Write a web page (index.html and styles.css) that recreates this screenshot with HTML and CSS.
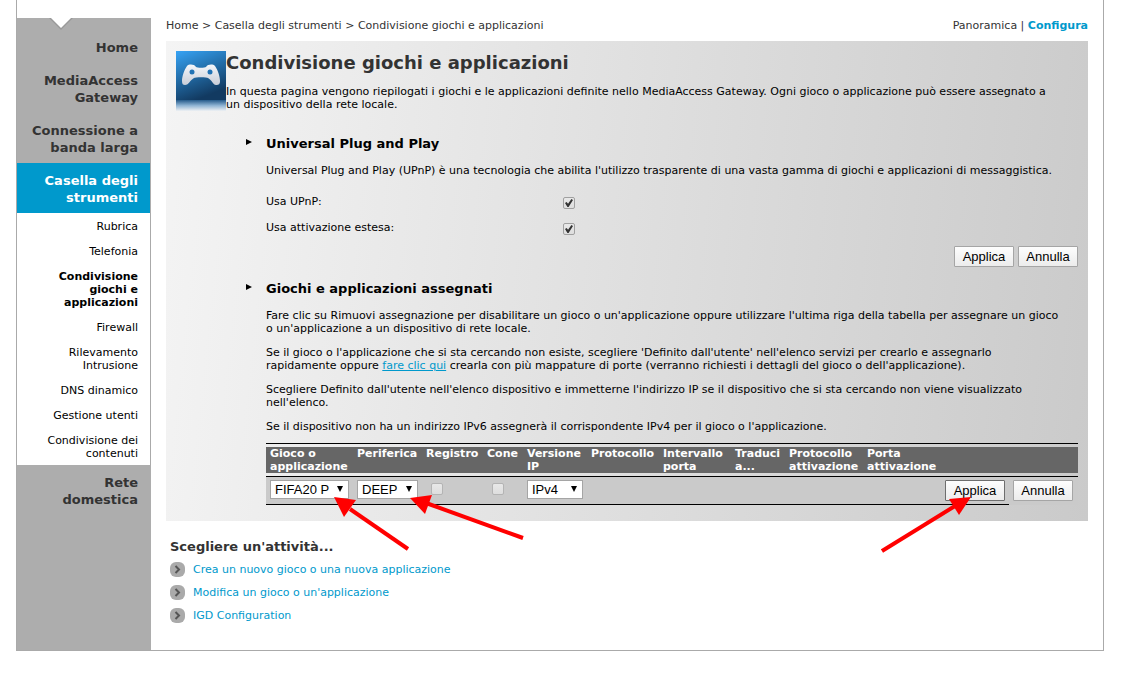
FILE: index.html
```
<!DOCTYPE html>
<html lang="it">
<head>
    <meta charset="UTF-8">
    <meta name="viewport" content="width=device-width, initial-scale=1.0">
    <title>MediaAccess Gateway - Condivisione giochi e applicazioni</title>
    <link rel="stylesheet" href="styles.css">
</head>
<body>

<div class="page">

    <!-- Left menu -->
    <nav class="sidebar">
        <svg class="notch" width="24" height="13" viewBox="0 0 24 13">
            <path d="M0 0 L12 12 L24 0 Z" fill="#999"/>
            <path d="M2 0 L12 10 L22 0 Z" fill="#fff"/>
        </svg>
        <a href="#" class="menu">Home</a>
        <a href="#" class="menu">MediaAccess Gateway</a>
        <a href="#" class="menu">Connessione a banda larga</a>
        <a href="#" class="menu active">Casella degli strumenti</a>
        <div class="submenu">
            <a href="#">Rubrica</a>
            <a href="#">Telefonia</a>
            <a href="#" class="current">Condivisione giochi e applicazioni</a>
            <a href="#">Firewall</a>
            <a href="#">Rilevamento Intrusione</a>
            <a href="#">DNS dinamico</a>
            <a href="#">Gestione utenti</a>
            <a href="#">Condivisione dei contenuti</a>
        </div>
        <a href="#" class="menu">Rete domestica</a>
    </nav>

    <main class="content">
        <div class="topbar">
            <div><a href="#">Home</a> &gt; <a href="#">Casella degli strumenti</a> &gt; <a href="#">Condivisione giochi e applicazioni</a></div>
            <div><a href="#">Panoramica</a> | <a href="#" class="configure">Configura</a></div>
        </div>

        <div class="panel">
            <div class="intro">
                <svg class="logo" width="50" height="60" viewBox="0 0 50 60">
                    <defs>
                        <linearGradient id="sky" x1="0" y1="0" x2="0.4" y2="1">
                            <stop offset="0" stop-color="#36a3f5"/>
                            <stop offset="0.5" stop-color="#236fab"/>
                            <stop offset="1" stop-color="#123a61"/>
                        </linearGradient>
                        <linearGradient id="fade" x1="0" y1="0" x2="0" y2="1">
                            <stop offset="0" stop-color="#245a8a"/>
                            <stop offset="0.5" stop-color="#8eb3d3"/>
                            <stop offset="1" stop-color="#eef1f4"/>
                        </linearGradient>
                        <linearGradient id="pad" x1="0" y1="0" x2="0" y2="1">
                            <stop offset="0" stop-color="#f4f6fa"/>
                            <stop offset="1" stop-color="#c9ced8"/>
                        </linearGradient>
                    </defs>
                    <rect width="50" height="49" fill="url(#sky)"/>
                    <rect y="49" width="50" height="11" fill="url(#fade)"/>
                    <path fill="url(#pad)" d="M11 15 C13 13 18 13 20 16 C21 17 29 17 30 16 C32 13 37 13 39 15 C42 19 44 26 44 30 C44 33 43 34 40 34 C37 34 36 29 32 27 C31 26 19 26 18 27 C14 29 13 34 9 34 C7 34 6 33 6 30 C6 26 8 19 11 15 Z"/>
                    <circle cx="16" cy="21" r="2.5" fill="#2273b5"/>
                    <circle cx="34" cy="21" r="2.5" fill="#2273b5"/>
                </svg>
                <div>
                    <h1>Condivisione giochi e applicazioni</h1>
                    <p>In questa pagina vengono riepilogati i giochi e le applicazioni definite nello MediaAccess Gateway. Ogni gioco o applicazione può essere assegnato a un dispositivo della rete locale.</p>
                </div>
            </div>

            <!-- UPnP -->
            <section>
                <h2>Universal Plug and Play</h2>
                <p>Universal Plug and Play (UPnP) è una tecnologia che abilita l'utilizzo trasparente di una vasta gamma di giochi e applicazioni di messaggistica.</p>
                <div class="option">
                    <label for="upnp">Usa UPnP:</label>
                    <input type="checkbox" id="upnp" checked>
                </div>
                <div class="option">
                    <label for="extended">Usa attivazione estesa:</label>
                    <input type="checkbox" id="extended" checked>
                </div>
                <div class="buttons">
                    <button>Applica</button>
                    <button>Annulla</button>
                </div>
            </section>

            <!-- Assigned games -->
            <section>
                <h2>Giochi e applicazioni assegnati</h2>
                <p>Fare clic su Rimuovi assegnazione per disabilitare un gioco o un'applicazione oppure utilizzare l'ultima riga della tabella per assegnare un gioco o un'applicazione a un dispositivo di rete locale.</p>
                <p>Se il gioco o l'applicazione che si sta cercando non esiste, scegliere 'Definito dall'utente' nell'elenco servizi per crearlo e assegnarlo rapidamente oppure <a href="#">fare clic qui</a> crearla con più mappature di porte (verranno richiesti i dettagli del gioco o dell'applicazione).</p>
                <p>Scegliere Definito dall'utente nell'elenco dispositivo e immetterne l'indirizzo IP se il dispositivo che si sta cercando non viene visualizzato nell'elenco.</p>
                <p>Se il dispositivo non ha un indirizzo IPv6 assegnerà il corrispondente IPv4 per il gioco o l'applicazione.</p>

                <div class="table-box">
                    <table>
                        <colgroup>
                            <col class="c-game">
                            <col class="c-device">
                            <col class="c-log">
                            <col class="c-cone">
                            <col class="c-ip">
                            <col class="c-proto">
                            <col class="c-proto">
                            <col class="c-map">
                            <col class="c-trigger">
                            <col class="c-trigger">
                            <col class="c-button">
                            <col>
                        </colgroup>
                        <thead>
                            <tr>
                                <th>Gioco o applicazione</th>
                                <th>Periferica</th>
                                <th>Registro</th>
                                <th>Cone</th>
                                <th>Versione IP</th>
                                <th>Protocollo</th>
                                <th>Intervallo porta</th>
                                <th>Traduci a...</th>
                                <th>Protocollo attivazione</th>
                                <th>Porta attivazione</th>
                                <th></th>
                                <th></th>
                            </tr>
                        </thead>
                        <tbody>
                            <tr>
                                <td><div class="select"><select aria-label="Gioco o applicazione"><option>FIFA20 P</option></select></div></td>
                                <td><div class="select"><select aria-label="Periferica"><option>DEEP</option></select></div></td>
                                <td><input type="checkbox" aria-label="Registro" disabled></td>
                                <td><input type="checkbox" aria-label="Cone" disabled></td>
                                <td><div class="select"><select aria-label="Versione IP"><option>IPv4</option><option>IPv6</option></select></div></td>
                                <td></td>
                                <td></td>
                                <td></td>
                                <td></td>
                                <td></td>
                                <td><button class="focus">Applica</button></td>
                                <td><button>Annulla</button></td>
                            </tr>
                        </tbody>
                    </table>

                    <!-- Red pointers over the last row -->
                    <svg class="pointer pointer-game" width="76" height="54" viewBox="0 0 76 54">
                        <path d="M16 12 L74 52" stroke="#f00" stroke-width="4"/>
                        <path d="M0 0 L22 3 L10 20 Z" fill="#f00"/>
                    </svg>
                    <svg class="pointer pointer-device" width="114" height="46" viewBox="0 0 114 46">
                        <path d="M16 8 L113 43" stroke="#f00" stroke-width="4"/>
                        <path d="M0 3 L22 0 L15 19 Z" fill="#f00"/>
                    </svg>
                    <svg class="pointer pointer-apply" width="92" height="56" viewBox="0 0 92 56">
                        <path d="M74 9 L1 54" stroke="#f00" stroke-width="4"/>
                        <path d="M90 0 L68 2 L78 18 Z" fill="#f00"/>
                    </svg>
                </div>
            </section>
        </div>

        <div class="tasks">
            <h3>Scegliere un'attività...</h3>
            <a href="#">
                <svg width="15" height="15" viewBox="0 0 15 15"><rect width="15" height="15" rx="6" fill="#aaa"/><path d="M5.500 4 L9 7.500 L5.500 11" fill="none" stroke="#555" stroke-width="2"/></svg>
                Crea un nuovo gioco o una nuova applicazione
            </a>
            <a href="#">
                <svg width="15" height="15" viewBox="0 0 15 15"><rect width="15" height="15" rx="6" fill="#aaa"/><path d="M5.500 4 L9 7.500 L5.500 11" fill="none" stroke="#555" stroke-width="2"/></svg>
                Modifica un gioco o un'applicazione
            </a>
            <a href="#">
                <svg width="15" height="15" viewBox="0 0 15 15"><rect width="15" height="15" rx="6" fill="#aaa"/><path d="M5.500 4 L9 7.500 L5.500 11" fill="none" stroke="#555" stroke-width="2"/></svg>
                IGD Configuration
            </a>
        </div>
    </main>
</div>

</body>
</html>
```

FILE: styles.css
```
* {
    box-sizing: border-box;
}
body {
    margin: 0;
    background-color: #fff;
    color: #000;
    font-family: Verdana, "DejaVu Sans", sans-serif;
    font-size: 11px;
    line-height: 13px;
}
a {
    color: #333;
    text-decoration: none;
}
h1, h2, h3, p {
    margin: 0;
}

.page {
    display: flex;
    margin: 0 29px 0 16px;
    padding-top: 18px;
    border: 1px solid #aaa;
    border-top: none;
}

/* left menu */
.sidebar {
    position: relative;
    flex: none;
    width: 134px;
    padding-top: 12px;
    background-color: #adadad;
    text-align: right;
}
.notch {
    position: absolute;
    top: 0;
    left: 32px;
}
.menu {
    display: block;
    padding: 9px 13px 7px 12px;
    color: #333;
    font-size: 13px;
    font-weight: bold;
    line-height: 17px;
}
.menu.active {
    margin-right: 1px;
    padding-right: 12px;
    background-color: #0099cc;
    color: #fff;
}
.submenu {
    background-color: #fff;
    border-right: 1px solid #aaa;
}
.submenu a {
    display: block;
    padding: 7px 12px 5px 27px;
    color: #000;
}
.submenu .current {
    font-weight: bold;
}

/* content */
.content {
    flex: 1;
    min-width: 0;
    padding: 0 15px 19px;
}
.topbar {
    display: flex;
    justify-content: space-between;
    padding: 1px 0 9px;
    color: #333;
}
.configure {
    color: #0099cc;
    font-weight: bold;
}
.panel {
    padding: 10px 10px 13px;
    background: linear-gradient(96deg, #f4f4f4, #cacaca);
}
.panel p {
    padding-right: 16px;
}
.intro {
    display: flex;
}
.logo {
    flex: none;
}
h1 {
    margin-bottom: 11px;
    color: #333;
    font-size: 18px;
    line-height: 23px;
}
section {
    padding: 24px 0 0 90px;
}
section + section {
    padding-top: 13px;
}
h2 {
    position: relative;
    margin-bottom: 12px;
    font-size: 13px;
    line-height: 17px;
}
h2::before {
    content: "";
    position: absolute;
    left: -20px;
    top: 4px;
    border: 3px solid transparent;
    border-left: 6px solid #000;
    border-right: none;
}
section p {
    margin-bottom: 11px;
}
section p a {
    color: #0099cc;
    text-decoration: underline;
}
.option {
    display: grid;
    grid-template-columns: 297px 1fr;
    align-items: center;
    height: 26px;
}
.option input[type="checkbox"] {
    margin-top: 4px;
}
.buttons {
    display: flex;
    justify-content: flex-end;
    gap: 4px;
    padding-top: 6px;
}

button {
    display: block;
    width: 60px;
    height: 21px;
    padding: 0;
    border: 1px solid #a5a5a5;
    border-radius: 1px;
    background: linear-gradient(#fdfdfd, #ececec);
    color: #000;
    font-family: Arial, "Liberation Sans", sans-serif;
    font-size: 13px;
}
button.focus {
    border-color: #6e6e6e;
}
input[type="checkbox"] {
    appearance: none;
    position: relative;
    display: block;
    width: 12px;
    height: 12px;
    margin: 0;
    border: 1px solid #a0a0a0;
    border-radius: 2px;
    background: linear-gradient(#e8e8e8, #dedede);
}
input[type="checkbox"]:checked::after {
    content: "";
    position: absolute;
    left: 1px;
    top: 1px;
    width: 8px;
    height: 8px;
    background-color: #333;
    clip-path: polygon(0 50%, 20% 38%, 38% 60%, 80% 0, 100% 12%, 45% 100%, 30% 100%);
}
input[type="checkbox"]:disabled {
    border-color: #b4b4b4;
}

/* table */
.table-box {
    position: relative;
    margin-top: -1px;
}
table {
    width: 100%;
    table-layout: fixed;
    border-collapse: separate;
    border-spacing: 0 3px;
    border-top: 1px solid #000;
}
th {
    padding: 0 0 0 4px;
    background-color: #666;
    color: #fff;
    text-align: left;
    vertical-align: top;
}
td {
    height: 29px;
    padding: 3px 4px;
    border-top: 1px solid #000;
    border-bottom: 1px solid #000;
    background-color: #cacaca;
    vertical-align: top;
}
td:last-child {
    border-bottom-color: transparent;
}
td input[type="checkbox"] {
    margin: 3px 5px;
}
.c-game { width: 87px; }
.c-device { width: 69px; }
.c-log { width: 61px; }
.c-cone { width: 40px; }
.c-ip { width: 64px; }
.c-proto { width: 72px; }
.c-map { width: 54px; }
.c-trigger { width: 78px; }
.c-button { width: 68px; }

.select {
    position: relative;
}
.select::after {
    content: "";
    position: absolute;
    right: 6px;
    top: 6px;
    border: 3px solid transparent;
    border-top: 6px solid #000;
    border-bottom: none;
    pointer-events: none;
}
select {
    appearance: none;
    display: block;
    width: 100%;
    height: 19px;
    padding: 0 0 0 4px;
    border: 1px solid #a5a5a5;
    border-radius: 0;
    background-color: #fff;
    color: #000;
    font-family: Arial, "Liberation Sans", sans-serif;
    font-size: 13px;
}

.pointer {
    position: absolute;
    pointer-events: none;
}
.pointer-game {
    left: 68px;
    top: 54px;
}
.pointer-device {
    left: 144px;
    top: 52px;
}
.pointer-apply {
    right: 105px;
    top: 54px;
}

/* tasks */
.tasks {
    padding: 17px 4px 0;
}
.tasks h3 {
    margin-bottom: 7px;
    color: #333;
    font-size: 13px;
    line-height: 17px;
}
.tasks a {
    display: flex;
    align-items: center;
    gap: 8px;
    margin-bottom: 8px;
    color: #0099cc;
}
```
